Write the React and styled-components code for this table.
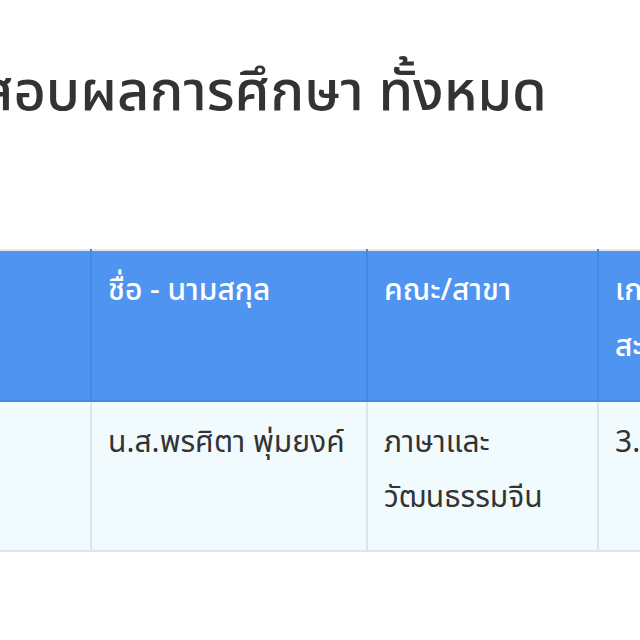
import React from 'react';
import styled, { createGlobalStyle } from 'styled-components';

const GlobalStyle = createGlobalStyle`
  html, body {
    margin: 0;
    padding: 0;
    background: #ffffff;
    overflow: hidden;
  }
  body {
    font-family: "Noto Sans Thai", "Noto Sans Thai Looped", "Loma", "Garuda", "Noto Sans", sans-serif;
    color: #333333;
  }
`;

const Page = styled.div`
  width: 1200px;
  margin-left: -141px;
  padding-top: 48px;
`;

const Title = styled.h1`
  margin: 0;
  font-size: 56px;
  font-weight: 500;
  line-height: 90px;
  color: #333333;
`;

const Table = styled.table`
  margin-top: 111px;
  border-collapse: collapse;
  border-top: 2px solid #e4e8ea;
`;

const HeadCell = styled.th`
  background: #5094f2;
  color: #ffffff;
  font-weight: 500;
  text-align: left;
  vertical-align: top;
  font-size: 30px;
  line-height: 56px;
  padding: 12px 16px;
  height: 151px;
  box-sizing: border-box;
  width: ${(p) => p.$w}px;
  border-left: 2px solid #4a86dc;
  border-bottom: 2px solid #4a86dc;
`;

const Line = styled.span`
  display: block;
  white-space: nowrap;
`;

const Cell = styled.td`
  background: #f1fbfd;
  color: #333333;
  text-align: left;
  vertical-align: top;
  font-size: 30px;
  line-height: 55px;
  padding: 14px 16px;
  height: 150px;
  box-sizing: border-box;
  border-left: 2px solid #dce7ea;
  border-bottom: 2px solid #e0e6e8;
`;

const columns = [
  { label: [], w: 231 },
  { label: ['ชื่อ - นามสกุล'], w: 276 },
  { label: ['คณะ/สาขา'], w: 231 },
  { label: ['เกรดเฉลี่ย', 'สะสม'], w: 200 },
];

const rows = [
  ['', 'น.ส.พรศิตา พุ่มยงค์', 'ภาษาและวัฒนธรรมจีน', '3.52'],
];

export default function App() {
  return (
    <>
      <GlobalStyle />
      <Page>
        <Title>ตรวจสอบผลการศึกษา ทั้งหมด</Title>
        <Table>
          <thead>
            <tr>
              {columns.map((c, i) => (
                <HeadCell key={i} $w={c.w}>
                  {c.label.map((l) => (
                    <Line key={l}>{l}</Line>
                  ))}
                </HeadCell>
              ))}
            </tr>
          </thead>
          <tbody>
            {rows.map((r, i) => (
              <tr key={i}>
                {r.map((v, j) => (
                  <Cell key={j}>{v}</Cell>
                ))}
              </tr>
            ))}
          </tbody>
        </Table>
      </Page>
    </>
  );
}
